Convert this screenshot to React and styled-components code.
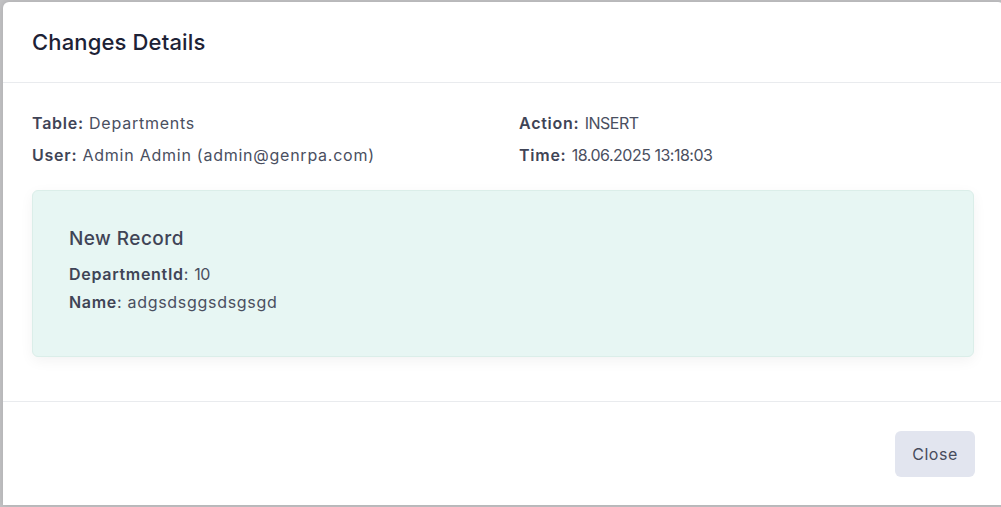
import React from "react";
import styled, { createGlobalStyle } from "styled-components";

const Global = createGlobalStyle`
  html, body {
    margin: 0;
    padding: 0;
    background: #c2c2c4;
    overflow: hidden;
  }
  body {
    font-family: Inter, "Open Sans", sans-serif;
  }
  * { box-sizing: border-box; }
`;

const Page = styled.div`
  width: 1001px;
  height: 507px;
  padding: 2px 0 0 3px;
  overflow: hidden;
`;

const Modal = styled.div`
  width: 1001px;
  height: 503px;
  background: #ffffff;
  border-radius: 6px 6px 0 0;
  display: flex;
  flex-direction: column;
  box-shadow: 0 0 6px rgba(0, 0, 0, 0.12);
`;

const Header = styled.div`
  height: 81px;
  flex: none;
  padding: 0 29px;
  display: flex;
  align-items: center;
  border-bottom: 1px solid #e9ebee;
`;

const Title = styled.h2`
  margin: 0;
  font-size: 22px;
  font-weight: 500;
  color: #1d2236;
  letter-spacing: 0.15px;
`;

const Body = styled.div`
  flex: 1;
  padding: 24px 30px 0 29px;
  border-bottom: 1px solid #e9ebee;
`;

const InfoGrid = styled.div`
  display: grid;
  grid-template-columns: 487px 1fr;
`;

const InfoItem = styled.div`
  font-size: 16px;
  line-height: 32px;
  letter-spacing: 0.75px;
  color: #4a4f5f;
  white-space: nowrap;
`;

const Label = styled.strong`
  font-weight: 600;
  color: #3f4456;
`;

const Value = styled.span`
  letter-spacing: ${(p) => (p.$tight ? "-0.5px" : "inherit")};
`;

const RecordCard = styled.div`
  margin-top: 19px;
  height: 167px;
  padding: 34px 36px;
  background: #e7f6f3;
  border: 1px solid #dbeee9;
  border-radius: 6px;
  box-shadow: 0 4px 14px rgba(0, 0, 0, 0.05);
`;

const RecordTitle = styled.h3`
  margin: 0 0 7px;
  font-size: 19px;
  font-weight: 500;
  line-height: 28px;
  letter-spacing: 0.45px;
  color: #3f4456;
`;

const Field = styled.div`
  font-size: 16px;
  line-height: 28px;
  letter-spacing: 0.7px;
  color: #4a4f5f;
`;

const Footer = styled.div`
  height: 103px;
  flex: none;
  padding: 0 29px;
  display: flex;
  align-items: center;
  justify-content: flex-end;
`;

const Button = styled.button`
  width: 80px;
  height: 46px;
  border: none;
  border-radius: 6px;
  background: #e2e5ef;
  color: #474c5c;
  font-family: inherit;
  font-size: 16px;
  letter-spacing: 0.5px;
  cursor: pointer;
`;

export default function App() {
  return (
    <>
      <Global />
      <Page>
        <Modal>
          <Header>
            <Title>Changes Details</Title>
          </Header>
          <Body>
            <InfoGrid>
              <InfoItem>
                <Label>Table:</Label> <Value>Departments</Value>
              </InfoItem>
              <InfoItem>
                <Label>Action:</Label> <Value $tight>INSERT</Value>
              </InfoItem>
              <InfoItem>
                <Label>User:</Label> <Value>Admin Admin (admin@genrpa.com)</Value>
              </InfoItem>
              <InfoItem>
                <Label>Time:</Label> <Value $tight>18.06.2025 13:18:03</Value>
              </InfoItem>
            </InfoGrid>
            <RecordCard>
              <RecordTitle>New Record</RecordTitle>
              <Field>
                <Label>DepartmentId</Label>: <Value $tight>10</Value>
              </Field>
              <Field>
                <Label>Name</Label>: <Value>adgsdsggsdsgsgd</Value>
              </Field>
            </RecordCard>
          </Body>
          <Footer>
            <Button>Close</Button>
          </Footer>
        </Modal>
      </Page>
    </>
  );
}
